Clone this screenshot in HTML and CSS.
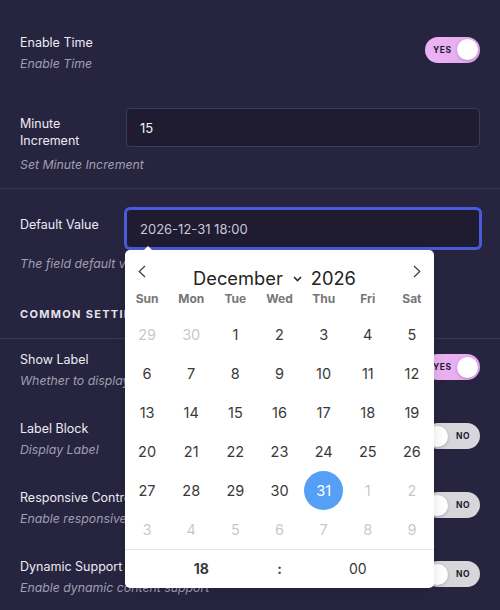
FILE: index.html
```html
<!DOCTYPE html>
<html lang="en">
<head>
<meta charset="utf-8">
<title>Date field settings</title>
<link rel="stylesheet" href="styles.css">
</head>
<body>
<div class="page">
  <section class="group group-top">
    <div class="row">
      <div class="text">
        <div class="label">Enable Time</div>
        <div class="desc">Enable Time</div>
      </div>
      <span class="switch on"><span class="switch-text">YES</span><span class="knob"></span></span>
    </div>
    <div class="field field-minute">
      <div class="field-line">
        <div class="label field-label">Minute Increment</div>
        <div class="input-wrap"><div class="input">15</div></div>
      </div>
      <div class="desc field-desc">Set Minute Increment</div>
    </div>
  </section>

  <section class="group group-mid">
    <div class="field">
      <div class="field-line">
        <div class="label field-label">Default Value</div>
        <div class="input-wrap">
          <div class="input focused">2026-12-31 18:00</div>
          <div class="calendar">
            <div class="cal-nav">
              <svg class="cal-arrow" width="8" height="13" viewBox="0 0 8 13"><path d="M7 1 L1.2 6.5 L7 12" fill="none" stroke="#3c3c3c" stroke-width="1.2"/></svg>
              <div class="cal-month">
                <span class="cal-month-name">December</span>
                <svg class="cal-caret" width="9" height="6" viewBox="0 0 9 6"><path d="M1 1 L4.5 4.5 L8 1" fill="none" stroke="#2a2a2a" stroke-width="1.6"/></svg>
                <span class="cal-year">2026</span>
              </div>
              <svg class="cal-arrow" width="8" height="13" viewBox="0 0 8 13"><path d="M1 1 L6.8 6.5 L1 12" fill="none" stroke="#3c3c3c" stroke-width="1.2"/></svg>
            </div>
            <div class="cal-weekdays">
              <span>Sun</span><span>Mon</span><span>Tue</span><span>Wed</span><span>Thu</span><span>Fri</span><span>Sat</span>
            </div>
            <div class="cal-days">
              <span class="other">29</span><span class="other">30</span><span>1</span><span>2</span><span>3</span><span>4</span><span>5</span>
              <span>6</span><span>7</span><span>8</span><span>9</span><span>10</span><span>11</span><span>12</span>
              <span>13</span><span>14</span><span>15</span><span>16</span><span>17</span><span>18</span><span>19</span>
              <span>20</span><span>21</span><span>22</span><span>23</span><span>24</span><span>25</span><span>26</span>
              <span>27</span><span>28</span><span>29</span><span>30</span><span class="selected">31</span><span class="other">1</span><span class="other">2</span>
              <span class="other">3</span><span class="other">4</span><span class="other">5</span><span class="other">6</span><span class="other">7</span><span class="other">8</span><span class="other">9</span>
            </div>
            <div class="cal-time">
              <span class="hour">18</span><span class="colon">:</span><span class="minute">00</span>
            </div>
          </div>
        </div>
      </div>
      <div class="desc field-desc focused-desc">The field default value</div>
    </div>
    <h3 class="heading">COMMON SETTINGS</h3>
  </section>

  <section class="group group-bottom">
    <div class="row">
      <div class="text">
        <div class="label">Show Label</div>
        <div class="desc">Whether to display label</div>
      </div>
      <span class="switch on"><span class="switch-text">YES</span><span class="knob"></span></span>
    </div>
    <div class="row">
      <div class="text">
        <div class="label">Label Block</div>
        <div class="desc">Display Label</div>
      </div>
      <span class="switch off"><span class="knob"></span><span class="switch-text">NO</span></span>
    </div>
    <div class="row">
      <div class="text">
        <div class="label">Responsive Control</div>
        <div class="desc">Enable responsive control</div>
      </div>
      <span class="switch off"><span class="knob"></span><span class="switch-text">NO</span></span>
    </div>
    <div class="row">
      <div class="text">
        <div class="label">Dynamic Support</div>
        <div class="desc">Enable dynamic content support</div>
      </div>
      <span class="switch off"><span class="knob"></span><span class="switch-text">NO</span></span>
    </div>
  </section>
</div>
</body>
</html>
```

FILE: styles.css
```css
html, body {
  margin: 0;
  padding: 0;
}

body {
  background: #27243f;
  font-family: Inter, "Liberation Sans", sans-serif;
  color: #ecebf3;
  width: 500px;
  height: 610px;
  overflow: hidden;
}

.group {
  padding: 0 20px 13px;
  border-bottom: 1px solid #3b3856;
}

.group-top {
  padding-top: 31.5px;
}

.group-mid {
  padding-top: 20px;
  padding-bottom: 16px;
}

.group-bottom {
  padding-top: 10.5px;
  border-bottom: none;
  display: flex;
  flex-direction: column;
  gap: 27px;
}

.label {
  font-size: 12.5px;
  line-height: 21px;
  color: #ecebf3;
}

.desc {
  font-size: 12.3px;
  line-height: 21px;
  font-style: italic;
  color: #a09eb1;
  white-space: nowrap;
}

.row {
  display: flex;
  align-items: center;
  justify-content: space-between;
}

/* switches */
.switch {
  width: 55px;
  height: 26px;
  box-sizing: border-box;
  border-radius: 13px;
  display: flex;
  align-items: center;
  justify-content: space-between;
  margin-bottom: 6px;
  flex: none;
}

.switch.on {
  background: linear-gradient(90deg, #ebb4f3, #e6a9f1);
  padding: 0 2px 0 8px;
}

.switch.off {
  background: #d6d6db;
  padding: 0 10px 0 2px;
}

.switch-text {
  font-size: 8.5px;
  font-weight: 700;
  letter-spacing: 0.5px;
  color: #1f1b2e;
}

.knob {
  width: 21px;
  height: 21px;
  border-radius: 50%;
  background: #ffffff;
  box-shadow: 0 1px 3px rgba(60, 20, 70, 0.25);
}

/* fields */
.field-minute {
  margin-top: 34.5px;
}

.field-line {
  display: flex;
}

.field-label {
  width: 90px;
  margin-right: 16px;
  padding-top: 6.5px;
  line-height: 17px;
  flex: none;
}

.input-wrap {
  flex: 1;
  position: relative;
}

.input {
  height: 39px;
  box-sizing: border-box;
  border: 1px solid #3d3a57;
  border-radius: 4px;
  background: #1f1c32;
  padding: 0 13px;
  display: flex;
  align-items: center;
  font-size: 13px;
  color: #f2f1f7;
}

.input.focused {
  border-color: #4b5ad8;
  box-shadow: 0 0 0 2px #4b5ad8;
  color: #c9c8d4;
}

.field-desc {
  margin-top: 5.5px;
}

.focused-desc {
  margin-top: 4.5px;
}

.heading {
  margin: 32px 0 0;
  font-size: 11px;
  font-weight: 700;
  letter-spacing: 1.3px;
  line-height: 16px;
  color: #e4e3ec;
}

/* calendar popup */
.calendar {
  position: absolute;
  left: -1px;
  top: calc(100% + 2px);
  width: 309px;
  background: #ffffff;
  border-radius: 5px;
  box-shadow: 0 3px 13px rgba(0, 0, 0, 0.12);
  color: #393939;
  z-index: 10;
}

.calendar::before {
  content: "";
  position: absolute;
  left: 18px;
  top: -9px;
  border: 5px solid transparent;
  border-bottom-color: #ffffff;
}

.cal-nav {
  height: 39px;
  display: flex;
  align-items: flex-start;
  padding: 0 13px;
}

.cal-arrow {
  margin-top: 15px;
  flex: none;
}

.cal-month {
  flex: 1;
  display: flex;
  align-items: center;
  justify-content: center;
  margin-top: 18px;
  padding-right: 10px;
  font-size: 18.3px;
  line-height: 20px;
  color: #232323;
}

.cal-caret {
  margin: 2px 9px 0 10px;
}

.cal-weekdays {
  display: grid;
  grid-template-columns: repeat(7, 1fr);
  height: 20px;
  line-height: 20px;
  font-size: 12px;
  font-weight: 700;
  color: #767676;
  text-align: center;
}

.cal-days {
  display: grid;
  grid-template-columns: repeat(7, 1fr);
  grid-auto-rows: 39px;
  padding-top: 5.5px;
  font-size: 14.5px;
  text-align: center;
}

.cal-days span {
  display: flex;
  align-items: center;
  justify-content: center;
}

.cal-days .other {
  color: rgba(57, 57, 57, 0.3);
}

.cal-days .selected {
  width: 39px;
  height: 39px;
  justify-self: center;
  border-radius: 50%;
  background: #569ff7;
  color: #ffffff;
}

.cal-time {
  border-top: 1px solid #e6e6e6;
  height: 38px;
  padding: 0 3px;
  display: grid;
  grid-template-columns: 1fr 10px 1fr;
  align-items: center;
  text-align: center;
  font-size: 14px;
  color: #393939;
}

.cal-time .hour,
.cal-time .colon {
  font-weight: 700;
}
```
